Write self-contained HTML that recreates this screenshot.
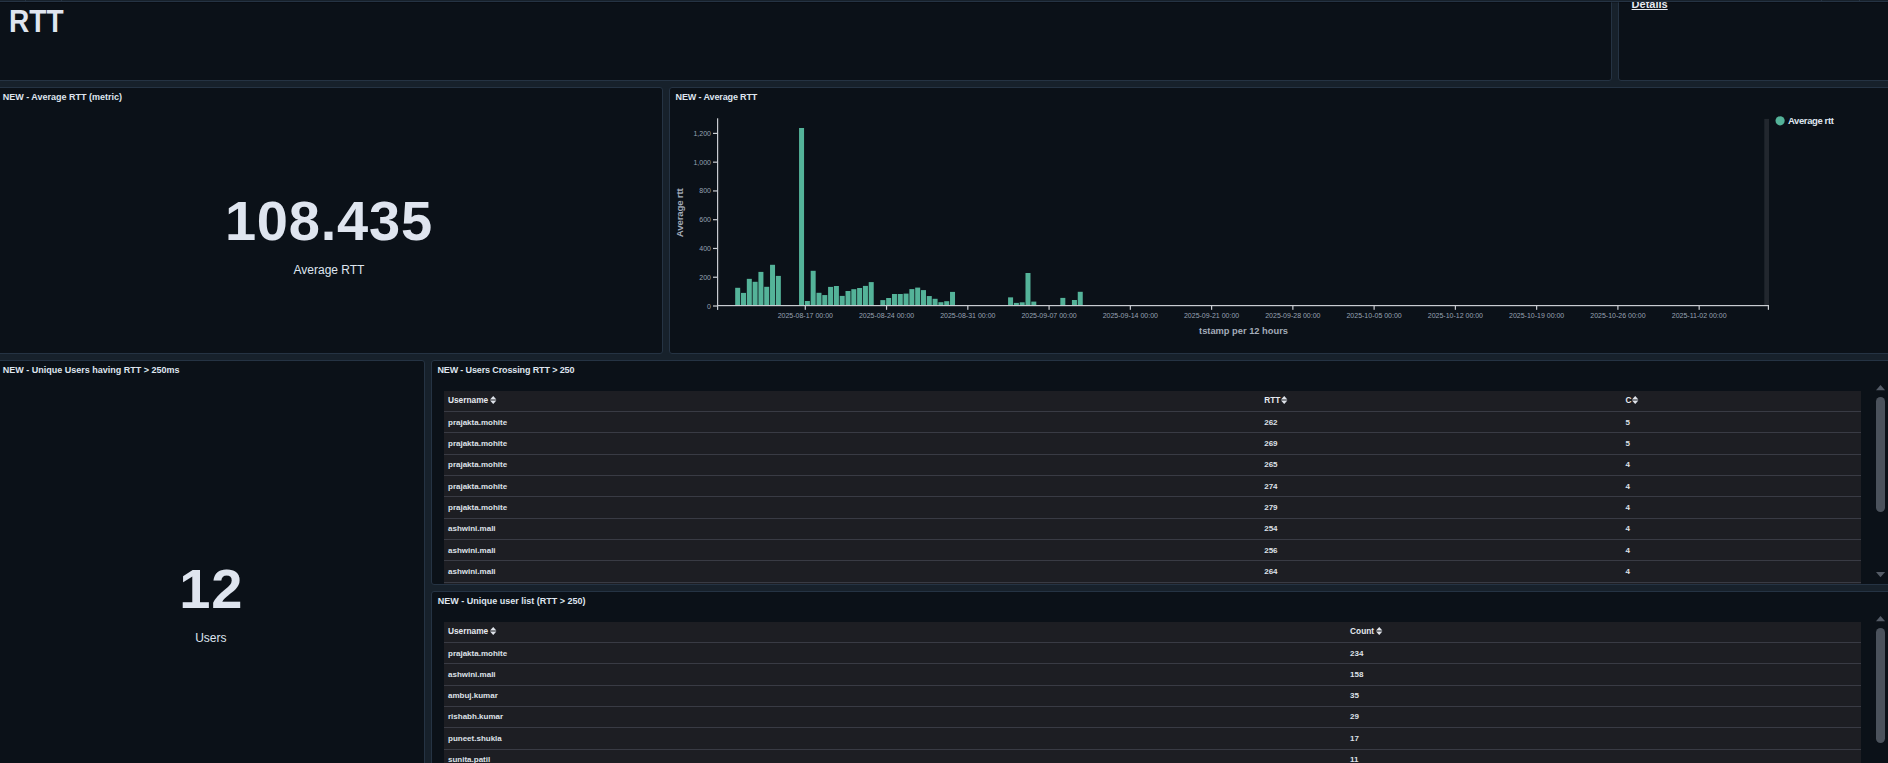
<!DOCTYPE html>
<html><head><meta charset="utf-8">
<style>
html,body{margin:0;padding:0;width:1888px;height:763px;overflow:hidden;background:#17212b;}
body{position:relative;font-family:"Liberation Sans",sans-serif;}
.p{position:absolute;box-sizing:border-box;border:1px solid #253343;border-radius:3px;background:#0b1118;overflow:hidden;}
.t{position:absolute;white-space:nowrap;line-height:1;color:#dfe5ef;}
.tbl{position:absolute;background:#1d1e23;overflow:hidden;}
.c{position:absolute;white-space:nowrap;line-height:1;font-size:8px;font-weight:bold;color:#dde1e8;}
.hd{color:#e6e9ef;}
</style></head><body>
<div class="p" style="left:-10px;top:-10px;width:1622px;height:91px;"></div>
<div class="p" style="left:1618px;top:-10px;width:290px;height:91px;"></div>
<div style="position:absolute;left:0;top:0;width:1888px;height:1px;background:#17212b"></div>
<div style="position:absolute;left:0;top:1px;width:1888px;height:1px;background:#253343"></div>
<div style="position:absolute;left:0;top:2px;width:1888px;height:1px;background:rgba(0,0,0,0.25)"></div>
<div style="position:absolute;left:25px;top:0;width:1px;height:1px;background:#253343"></div><div style="position:absolute;left:61px;top:0;width:1px;height:1px;background:#253343"></div><div style="position:absolute;left:1821px;top:0;width:1px;height:1px;background:#253343"></div><div style="position:absolute;left:1859px;top:0;width:1px;height:1px;background:#253343"></div>
<div class="p" style="left:-10px;top:87px;width:673px;height:267px;"></div>
<div class="p" style="left:669px;top:87px;width:1240px;height:267px;"></div>
<div class="p" style="left:-10px;top:360px;width:435px;height:420px;"></div>
<div class="p" style="left:431px;top:360px;width:1480px;height:225px;"></div>
<div class="p" style="left:431px;top:591px;width:1480px;height:200px;"></div>
<svg width="1888" height="763" viewBox="0 0 1888 763" style="position:absolute;left:0;top:0">
<rect x="1764.3" y="118.9" width="4.7" height="186.3" fill="#22272e"/>
<rect x="718.6" y="118.3" width="1" height="187" fill="#171b21"/>
<rect x="735.19" y="287.80" width="5.0" height="17.20" fill="#54b399"/>
<rect x="741.00" y="292.90" width="5.0" height="12.10" fill="#54b399"/>
<rect x="746.81" y="278.85" width="5.0" height="26.15" fill="#54b399"/>
<rect x="752.61" y="281.80" width="5.0" height="23.20" fill="#54b399"/>
<rect x="758.42" y="271.90" width="5.0" height="33.10" fill="#54b399"/>
<rect x="764.22" y="286.80" width="5.0" height="18.20" fill="#54b399"/>
<rect x="770.03" y="264.80" width="5.0" height="40.20" fill="#54b399"/>
<rect x="775.84" y="275.90" width="5.0" height="29.10" fill="#54b399"/>
<rect x="799.06" y="128.00" width="5.0" height="177.00" fill="#54b399"/>
<rect x="804.87" y="301.00" width="5.0" height="4.00" fill="#54b399"/>
<rect x="810.67" y="270.80" width="5.0" height="34.20" fill="#54b399"/>
<rect x="816.48" y="292.80" width="5.0" height="12.20" fill="#54b399"/>
<rect x="822.28" y="295.06" width="5.0" height="9.94" fill="#54b399"/>
<rect x="828.09" y="286.90" width="5.0" height="18.10" fill="#54b399"/>
<rect x="833.90" y="286.00" width="5.0" height="19.00" fill="#54b399"/>
<rect x="839.70" y="295.90" width="5.0" height="9.10" fill="#54b399"/>
<rect x="845.51" y="291.00" width="5.0" height="14.00" fill="#54b399"/>
<rect x="851.31" y="289.20" width="5.0" height="15.80" fill="#54b399"/>
<rect x="857.12" y="288.00" width="5.0" height="17.00" fill="#54b399"/>
<rect x="862.93" y="285.90" width="5.0" height="19.10" fill="#54b399"/>
<rect x="868.73" y="282.10" width="5.0" height="22.90" fill="#54b399"/>
<rect x="880.34" y="300.10" width="5.0" height="4.90" fill="#54b399"/>
<rect x="886.15" y="298.00" width="5.0" height="7.00" fill="#54b399"/>
<rect x="891.96" y="294.00" width="5.0" height="11.00" fill="#54b399"/>
<rect x="897.76" y="294.00" width="5.0" height="11.00" fill="#54b399"/>
<rect x="903.57" y="293.60" width="5.0" height="11.40" fill="#54b399"/>
<rect x="909.37" y="289.10" width="5.0" height="15.90" fill="#54b399"/>
<rect x="915.18" y="287.60" width="5.0" height="17.40" fill="#54b399"/>
<rect x="920.99" y="290.10" width="5.0" height="14.90" fill="#54b399"/>
<rect x="926.79" y="296.05" width="5.0" height="8.95" fill="#54b399"/>
<rect x="932.60" y="298.80" width="5.0" height="6.20" fill="#54b399"/>
<rect x="938.40" y="302.20" width="5.0" height="2.80" fill="#54b399"/>
<rect x="944.21" y="301.20" width="5.0" height="3.80" fill="#54b399"/>
<rect x="950.02" y="291.90" width="5.0" height="13.10" fill="#54b399"/>
<rect x="1008.08" y="297.35" width="5.0" height="7.65" fill="#54b399"/>
<rect x="1013.88" y="302.90" width="5.0" height="2.10" fill="#54b399"/>
<rect x="1019.69" y="302.30" width="5.0" height="2.70" fill="#54b399"/>
<rect x="1025.49" y="273.00" width="5.0" height="32.00" fill="#54b399"/>
<rect x="1031.30" y="301.60" width="5.0" height="3.40" fill="#54b399"/>
<rect x="1060.33" y="297.90" width="5.0" height="7.10" fill="#54b399"/>
<rect x="1071.94" y="300.00" width="5.0" height="5.00" fill="#54b399"/>
<rect x="1077.75" y="291.80" width="5.0" height="13.20" fill="#54b399"/>
<rect x="717" y="118.3" width="1.2" height="191.6" fill="#c9ccd1"/>
<rect x="717" y="305" width="1052" height="1.2" fill="#c9ccd1"/>
<rect x="713" y="305.40" width="4.5" height="1.2" fill="#c9ccd1"/>
<rect x="713" y="276.63" width="4.5" height="1.2" fill="#c9ccd1"/>
<rect x="713" y="247.87" width="4.5" height="1.2" fill="#c9ccd1"/>
<rect x="713" y="219.10" width="4.5" height="1.2" fill="#c9ccd1"/>
<rect x="713" y="190.34" width="4.5" height="1.2" fill="#c9ccd1"/>
<rect x="713" y="161.57" width="4.5" height="1.2" fill="#c9ccd1"/>
<rect x="713" y="132.80" width="4.5" height="1.2" fill="#c9ccd1"/>
<rect x="804.70" y="305" width="1.2" height="4.8" fill="#c9ccd1"/>
<rect x="885.96" y="305" width="1.2" height="4.8" fill="#c9ccd1"/>
<rect x="967.22" y="305" width="1.2" height="4.8" fill="#c9ccd1"/>
<rect x="1048.48" y="305" width="1.2" height="4.8" fill="#c9ccd1"/>
<rect x="1129.74" y="305" width="1.2" height="4.8" fill="#c9ccd1"/>
<rect x="1211.00" y="305" width="1.2" height="4.8" fill="#c9ccd1"/>
<rect x="1292.26" y="305" width="1.2" height="4.8" fill="#c9ccd1"/>
<rect x="1373.52" y="305" width="1.2" height="4.8" fill="#c9ccd1"/>
<rect x="1454.78" y="305" width="1.2" height="4.8" fill="#c9ccd1"/>
<rect x="1536.04" y="305" width="1.2" height="4.8" fill="#c9ccd1"/>
<rect x="1617.30" y="305" width="1.2" height="4.8" fill="#c9ccd1"/>
<rect x="1698.56" y="305" width="1.2" height="4.8" fill="#c9ccd1"/>
<rect x="1767.8" y="305" width="1.2" height="4.8" fill="#c9ccd1"/>
<circle cx="1780.1" cy="120.8" r="4.6" fill="#54b399"/>
</svg>
<div class="t" style="right:1177.0px;top:302.50px;font-size:7px;color:#98a2b3;text-align:right">0</div>
<div class="t" style="right:1177.0px;top:273.73px;font-size:7px;color:#98a2b3;text-align:right">200</div>
<div class="t" style="right:1177.0px;top:244.97px;font-size:7px;color:#98a2b3;text-align:right">400</div>
<div class="t" style="right:1177.0px;top:216.20px;font-size:7px;color:#98a2b3;text-align:right">600</div>
<div class="t" style="right:1177.0px;top:187.44px;font-size:7px;color:#98a2b3;text-align:right">800</div>
<div class="t" style="right:1177.0px;top:158.67px;font-size:7px;color:#98a2b3;text-align:right">1,000</div>
<div class="t" style="right:1177.0px;top:129.90px;font-size:7px;color:#98a2b3;text-align:right">1,200</div>
<div class="t" style="left:775.30px;width:60px;text-align:center;top:312.2px;font-size:7px;color:#98a2b3">2025-08-17 00:00</div>
<div class="t" style="left:856.56px;width:60px;text-align:center;top:312.2px;font-size:7px;color:#98a2b3">2025-08-24 00:00</div>
<div class="t" style="left:937.82px;width:60px;text-align:center;top:312.2px;font-size:7px;color:#98a2b3">2025-08-31 00:00</div>
<div class="t" style="left:1019.08px;width:60px;text-align:center;top:312.2px;font-size:7px;color:#98a2b3">2025-09-07 00:00</div>
<div class="t" style="left:1100.34px;width:60px;text-align:center;top:312.2px;font-size:7px;color:#98a2b3">2025-09-14 00:00</div>
<div class="t" style="left:1181.60px;width:60px;text-align:center;top:312.2px;font-size:7px;color:#98a2b3">2025-09-21 00:00</div>
<div class="t" style="left:1262.86px;width:60px;text-align:center;top:312.2px;font-size:7px;color:#98a2b3">2025-09-28 00:00</div>
<div class="t" style="left:1344.12px;width:60px;text-align:center;top:312.2px;font-size:7px;color:#98a2b3">2025-10-05 00:00</div>
<div class="t" style="left:1425.38px;width:60px;text-align:center;top:312.2px;font-size:7px;color:#98a2b3">2025-10-12 00:00</div>
<div class="t" style="left:1506.64px;width:60px;text-align:center;top:312.2px;font-size:7px;color:#98a2b3">2025-10-19 00:00</div>
<div class="t" style="left:1587.90px;width:60px;text-align:center;top:312.2px;font-size:7px;color:#98a2b3">2025-10-26 00:00</div>
<div class="t" style="left:1669.16px;width:60px;text-align:center;top:312.2px;font-size:7px;color:#98a2b3">2025-11-02 00:00</div>

<div class="t" style="left:9.0px;top:5.9px;font-size:30.5px;font-weight:bold;transform:scaleX(0.92);transform-origin:0 0">RTT</div>
<div class="t" style="left:2.70px;top:92.88px;font-size:9px;font-weight:bold;">NEW - Average RTT (metric)</div>
<div class="t" style="left:675.60px;top:92.88px;font-size:9px;font-weight:bold;letter-spacing:-0.13px;">NEW - Average RTT</div>
<div class="t" style="left:2.70px;top:365.98px;font-size:9px;font-weight:bold;">NEW - Unique Users having RTT &gt; 250ms</div>
<div class="t" style="left:437.40px;top:365.98px;font-size:9px;font-weight:bold;letter-spacing:-0.13px;">NEW - Users Crossing RTT &gt; 250</div>
<div class="t" style="left:437.80px;top:596.98px;font-size:9px;font-weight:bold;">NEW - Unique user list (RTT &gt; 250)</div>
<div class="t" style="left:128.90px;width:400px;text-align:center;top:193.30px;font-size:56px;font-weight:bold;letter-spacing:0.8px;">108.435</div>
<div class="t" style="left:129.00px;width:400px;text-align:center;top:263.84px;font-size:12px;">Average RTT</div>
<div class="t" style="left:11.30px;width:400px;text-align:center;top:561.00px;font-size:56px;font-weight:bold;letter-spacing:1px;">12</div>
<div class="t" style="left:10.80px;width:400px;text-align:center;top:632.04px;font-size:12px;">Users</div>
<div class="t" style="left:630.3px;width:100px;text-align:center;top:207.8px;font-size:9.8px;letter-spacing:-0.25px;font-weight:bold;color:#a3acb9;transform:rotate(-90deg);transform-origin:50% 50%">Average rtt</div>
<div class="t" style="left:1043.50px;width:400px;text-align:center;top:326.73px;font-size:9.3px;font-weight:bold;color:#a3acb9;">tstamp per 12 hours</div>
<div class="t" style="left:1788.00px;top:115.96px;font-size:9.5px;font-weight:bold;color:#dfe5ef;letter-spacing:-0.4px;">Average rtt</div>
<div class="tbl" style="left:444px;top:391px;width:1417px;height:193px"></div>
<div style="position:absolute;left:444px;width:1417px;top:411px;height:1px;background:#393b44"></div>
<div style="position:absolute;left:444px;width:1417px;top:432px;height:1px;background:#393b44"></div>
<div style="position:absolute;left:444px;width:1417px;top:454px;height:1px;background:#393b44"></div>
<div style="position:absolute;left:444px;width:1417px;top:475px;height:1px;background:#393b44"></div>
<div style="position:absolute;left:444px;width:1417px;top:496px;height:1px;background:#393b44"></div>
<div style="position:absolute;left:444px;width:1417px;top:518px;height:1px;background:#393b44"></div>
<div style="position:absolute;left:444px;width:1417px;top:539px;height:1px;background:#393b44"></div>
<div style="position:absolute;left:444px;width:1417px;top:560px;height:1px;background:#393b44"></div>
<div style="position:absolute;left:444px;width:1417px;top:582px;height:1px;background:#393b44"></div>
<div class="c hd" style="left:448.00px;top:396.42px;font-size:8.3px;font-weight:bold;">Username</div>
<div class="c hd" style="left:1264.20px;top:396.42px;font-size:8.3px;font-weight:bold;">RTT</div>
<div class="c hd" style="left:1625.60px;top:396.42px;font-size:8.3px;font-weight:bold;">C</div>
<div class="c" style="left:448.00px;top:418.83px;font-size:8px;font-weight:bold;">prajakta.mohite</div>
<div class="c" style="left:1264.20px;top:418.83px;font-size:8px;font-weight:bold;">262</div>
<div class="c" style="left:1625.60px;top:418.83px;font-size:8px;font-weight:bold;">5</div>
<div class="c" style="left:448.00px;top:440.13px;font-size:8px;font-weight:bold;">prajakta.mohite</div>
<div class="c" style="left:1264.20px;top:440.13px;font-size:8px;font-weight:bold;">269</div>
<div class="c" style="left:1625.60px;top:440.13px;font-size:8px;font-weight:bold;">5</div>
<div class="c" style="left:448.00px;top:461.43px;font-size:8px;font-weight:bold;">prajakta.mohite</div>
<div class="c" style="left:1264.20px;top:461.43px;font-size:8px;font-weight:bold;">265</div>
<div class="c" style="left:1625.60px;top:461.43px;font-size:8px;font-weight:bold;">4</div>
<div class="c" style="left:448.00px;top:482.73px;font-size:8px;font-weight:bold;">prajakta.mohite</div>
<div class="c" style="left:1264.20px;top:482.73px;font-size:8px;font-weight:bold;">274</div>
<div class="c" style="left:1625.60px;top:482.73px;font-size:8px;font-weight:bold;">4</div>
<div class="c" style="left:448.00px;top:504.03px;font-size:8px;font-weight:bold;">prajakta.mohite</div>
<div class="c" style="left:1264.20px;top:504.03px;font-size:8px;font-weight:bold;">279</div>
<div class="c" style="left:1625.60px;top:504.03px;font-size:8px;font-weight:bold;">4</div>
<div class="c" style="left:448.00px;top:525.33px;font-size:8px;font-weight:bold;">ashwini.mali</div>
<div class="c" style="left:1264.20px;top:525.33px;font-size:8px;font-weight:bold;">254</div>
<div class="c" style="left:1625.60px;top:525.33px;font-size:8px;font-weight:bold;">4</div>
<div class="c" style="left:448.00px;top:546.63px;font-size:8px;font-weight:bold;">ashwini.mali</div>
<div class="c" style="left:1264.20px;top:546.63px;font-size:8px;font-weight:bold;">256</div>
<div class="c" style="left:1625.60px;top:546.63px;font-size:8px;font-weight:bold;">4</div>
<div class="c" style="left:448.00px;top:567.93px;font-size:8px;font-weight:bold;">ashwini.mali</div>
<div class="c" style="left:1264.20px;top:567.93px;font-size:8px;font-weight:bold;">264</div>
<div class="c" style="left:1625.60px;top:567.93px;font-size:8px;font-weight:bold;">4</div>
<svg width="7" height="8" viewBox="0 0 7 8" style="position:absolute;left:489.90px;top:395.80px"><path d="M3.2 0 L6.4 3.6 L0 3.6 Z M0 4.4 L6.4 4.4 L3.2 8 Z" fill="#dfe3ea"/></svg>
<svg width="7" height="8" viewBox="0 0 7 8" style="position:absolute;left:1280.90px;top:395.80px"><path d="M3.2 0 L6.4 3.6 L0 3.6 Z M0 4.4 L6.4 4.4 L3.2 8 Z" fill="#dfe3ea"/></svg>
<svg width="7" height="8" viewBox="0 0 7 8" style="position:absolute;left:1631.90px;top:395.80px"><path d="M3.2 0 L6.4 3.6 L0 3.6 Z M0 4.4 L6.4 4.4 L3.2 8 Z" fill="#dfe3ea"/></svg>
<div class="tbl" style="left:444px;top:622px;width:1417px;height:141px"></div>
<div style="position:absolute;left:444px;width:1417px;top:642px;height:1px;background:#393b44"></div>
<div style="position:absolute;left:444px;width:1417px;top:663px;height:1px;background:#393b44"></div>
<div style="position:absolute;left:444px;width:1417px;top:685px;height:1px;background:#393b44"></div>
<div style="position:absolute;left:444px;width:1417px;top:706px;height:1px;background:#393b44"></div>
<div style="position:absolute;left:444px;width:1417px;top:727px;height:1px;background:#393b44"></div>
<div style="position:absolute;left:444px;width:1417px;top:749px;height:1px;background:#393b44"></div>
<div class="c hd" style="left:448.00px;top:626.97px;font-size:8.3px;font-weight:bold;">Username</div>
<div class="c hd" style="left:1350.10px;top:626.97px;font-size:8.3px;font-weight:bold;">Count</div>
<div class="c" style="left:448.00px;top:649.63px;font-size:8px;font-weight:bold;">prajakta.mohite</div>
<div class="c" style="left:1350.10px;top:649.63px;font-size:8px;font-weight:bold;">234</div>
<div class="c" style="left:448.00px;top:670.88px;font-size:8px;font-weight:bold;">ashwini.mali</div>
<div class="c" style="left:1350.10px;top:670.88px;font-size:8px;font-weight:bold;">158</div>
<div class="c" style="left:448.00px;top:692.13px;font-size:8px;font-weight:bold;">ambuj.kumar</div>
<div class="c" style="left:1350.10px;top:692.13px;font-size:8px;font-weight:bold;">35</div>
<div class="c" style="left:448.00px;top:713.38px;font-size:8px;font-weight:bold;">rishabh.kumar</div>
<div class="c" style="left:1350.10px;top:713.38px;font-size:8px;font-weight:bold;">29</div>
<div class="c" style="left:448.00px;top:734.63px;font-size:8px;font-weight:bold;">puneet.shukla</div>
<div class="c" style="left:1350.10px;top:734.63px;font-size:8px;font-weight:bold;">17</div>
<div class="c" style="left:448.00px;top:755.88px;font-size:8px;font-weight:bold;">sunita.patil</div>
<div class="c" style="left:1350.10px;top:755.88px;font-size:8px;font-weight:bold;">11</div>
<svg width="7" height="8" viewBox="0 0 7 8" style="position:absolute;left:489.90px;top:627.00px"><path d="M3.2 0 L6.4 3.6 L0 3.6 Z M0 4.4 L6.4 4.4 L3.2 8 Z" fill="#dfe3ea"/></svg>
<svg width="7" height="8" viewBox="0 0 7 8" style="position:absolute;left:1375.60px;top:627.00px"><path d="M3.2 0 L6.4 3.6 L0 3.6 Z M0 4.4 L6.4 4.4 L3.2 8 Z" fill="#dfe3ea"/></svg>
<svg width="12" height="200" style="position:absolute;left:1875px;top:383.7px;overflow:visible" viewBox="0 0 12 200"><path d="M5.5 1 L10.1 6.3 L1 6.3 Z" fill="#545b66"/></svg>
<div style="position:absolute;left:1876px;top:396.8px;width:9.1px;height:115.0px;border-radius:4.6px;background:#4b525c"></div>
<svg width="12" height="8" style="position:absolute;left:1875px;top:570.9px" viewBox="0 0 12 8"><path d="M1 1 L10.1 1 L5.5 6.3 Z" fill="#545b66"/></svg>
<svg width="12" height="200" style="position:absolute;left:1875px;top:615.0px;overflow:visible" viewBox="0 0 12 200"><path d="M5.5 1 L10.1 6.3 L1 6.3 Z" fill="#545b66"/></svg>
<div style="position:absolute;left:1876px;top:628.0px;width:9.1px;height:115.0px;border-radius:4.6px;background:#4b525c"></div>
<div style="position:absolute;left:1619px;top:2px;width:269px;height:78px;overflow:hidden"><div class="t" style="left:12.6px;top:-2.6px;font-size:11px;font-weight:bold;text-decoration:underline;color:#e4e8ef">Details</div></div>

</body></html>
